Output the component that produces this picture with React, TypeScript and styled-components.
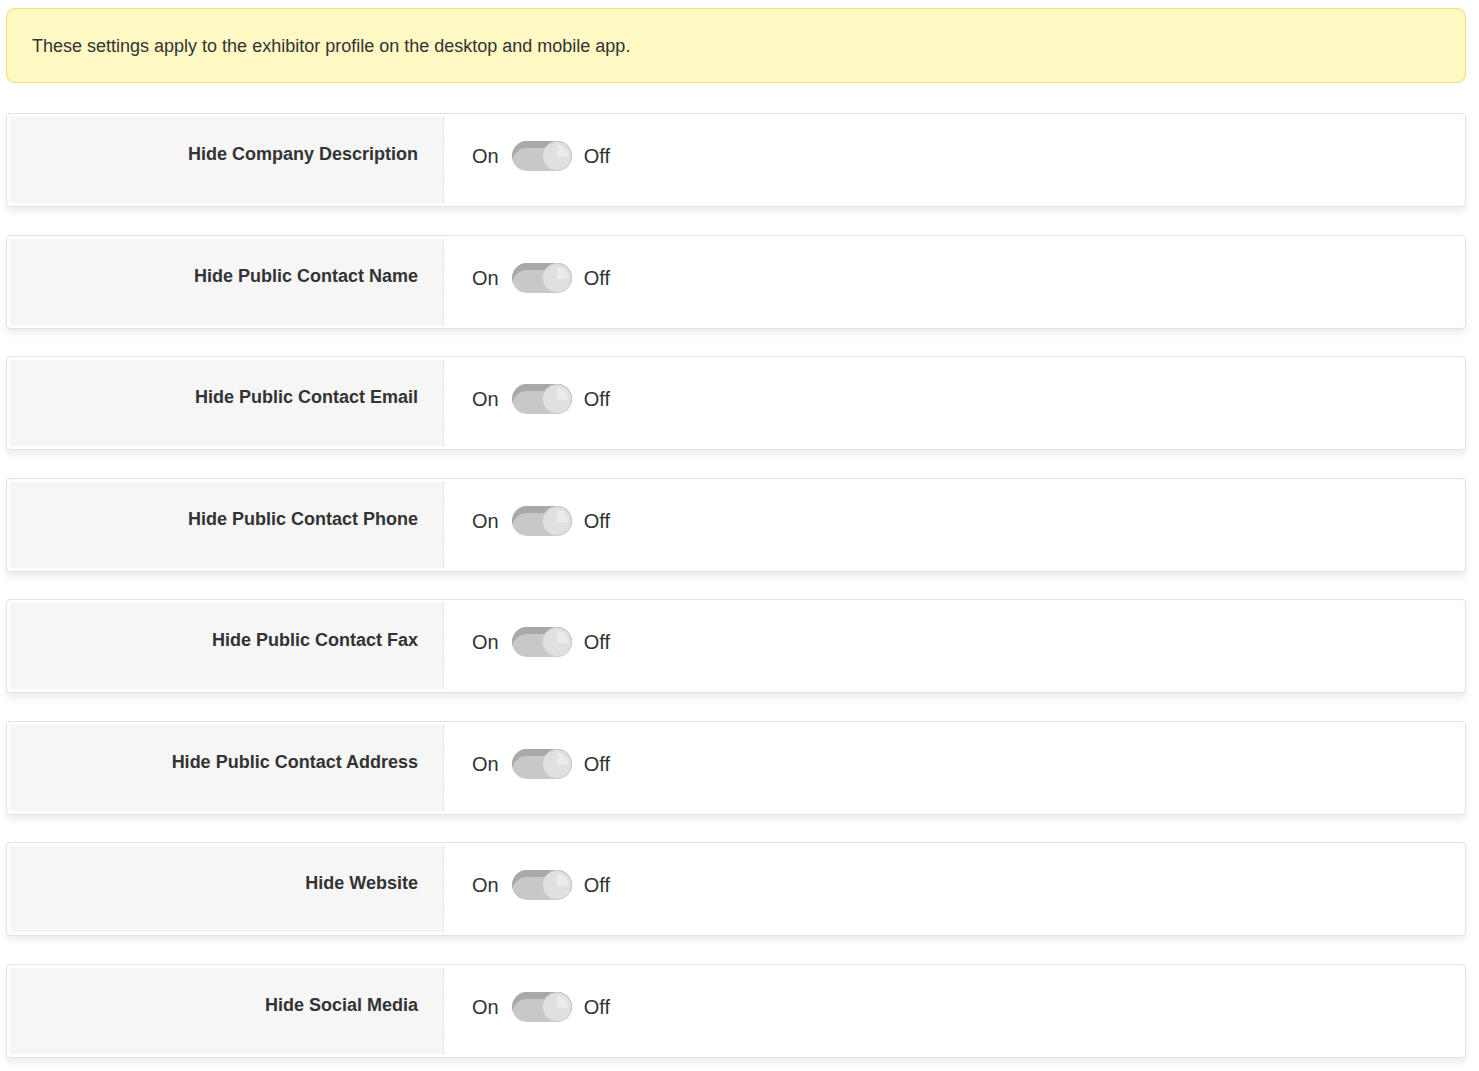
import React from "react";
import styled, { createGlobalStyle } from "styled-components";

const GlobalStyle = createGlobalStyle`
  body {
    margin: 0;
    background: #ffffff;
    font-family: "Liberation Sans", Arial, sans-serif;
    color: #333333;
  }
`;

const Page = styled.div`
  padding: 8px 13px 20px 6px;
`;

const Notice = styled.div`
  background: #fff9c4;
  border: 1px solid #f7dd6a;
  border-radius: 9px;
  padding: 26px 25px 25px;
  font-size: 18px;
  line-height: 22px;
  color: #333333;
  margin-bottom: 30px;
`;

const Card = styled.div`
  display: flex;
  height: 86px;
  padding: 3px;
  border: 1px solid #e2e2e2;
  border-radius: 4px;
  background: #ffffff;
  box-shadow: 0 5px 6px rgba(0, 0, 0, 0.07);
  margin-bottom: 27.5px;
`;

const LabelCell = styled.div`
  width: 408px;
  flex: none;
  background: #f6f6f6;
  border-right: 1px dashed #dedede;
  padding: 26px 25px 0 0;
  text-align: right;
  font-size: 18px;
  line-height: 22px;
  font-weight: bold;
  color: #333333;
`;

const ControlCell = styled.div`
  display: flex;
  align-items: center;
  align-self: flex-start;
  margin-top: 24px;
  padding-left: 28px;
  font-size: 20px;
  line-height: 24px;
  color: #333333;
`;

const Track = styled.div`
  position: relative;
  width: 60px;
  height: 30px;
  border-radius: 15px;
  background: #c8c8c8;
  box-shadow: inset 0 7px 0 #a9a9a9;
  margin: 0 12px 0 13px;
`;

const Knob = styled.div<{ $on: boolean }>`
  position: absolute;
  top: 0;
  ${(p) => (p.$on ? "left: 0;" : "right: 0;")}
  width: 30px;
  height: 30px;
  box-sizing: border-box;
  border-radius: 50%;
  background: #e0e0e0;
  border: 1px solid #d0d0d0;
  overflow: hidden;

  &::after {
    content: "";
    position: absolute;
    top: 3px;
    left: 14px;
    width: 11px;
    height: 12px;
    background: #ebebeb;
    border-top-right-radius: 11px;
  }
`;

const settings = [
  "Hide Company Description",
  "Hide Public Contact Name",
  "Hide Public Contact Email",
  "Hide Public Contact Phone",
  "Hide Public Contact Fax",
  "Hide Public Contact Address",
  "Hide Website",
  "Hide Social Media",
];

const Toggle: React.FC<{ on: boolean }> = ({ on }) => (
  <Track>
    <Knob $on={on} />
  </Track>
);

const App: React.FC = () => {
  return (
    <>
      <GlobalStyle />
      <Page>
        <Notice>
          These settings apply to the exhibitor profile on the desktop and
          mobile app.
        </Notice>
        {settings.map((label) => (
          <Card key={label}>
            <LabelCell>{label}</LabelCell>
            <ControlCell>
              <span>On</span>
              <Toggle on={false} />
              <span>Off</span>
            </ControlCell>
          </Card>
        ))}
      </Page>
    </>
  );
};

export default App;
